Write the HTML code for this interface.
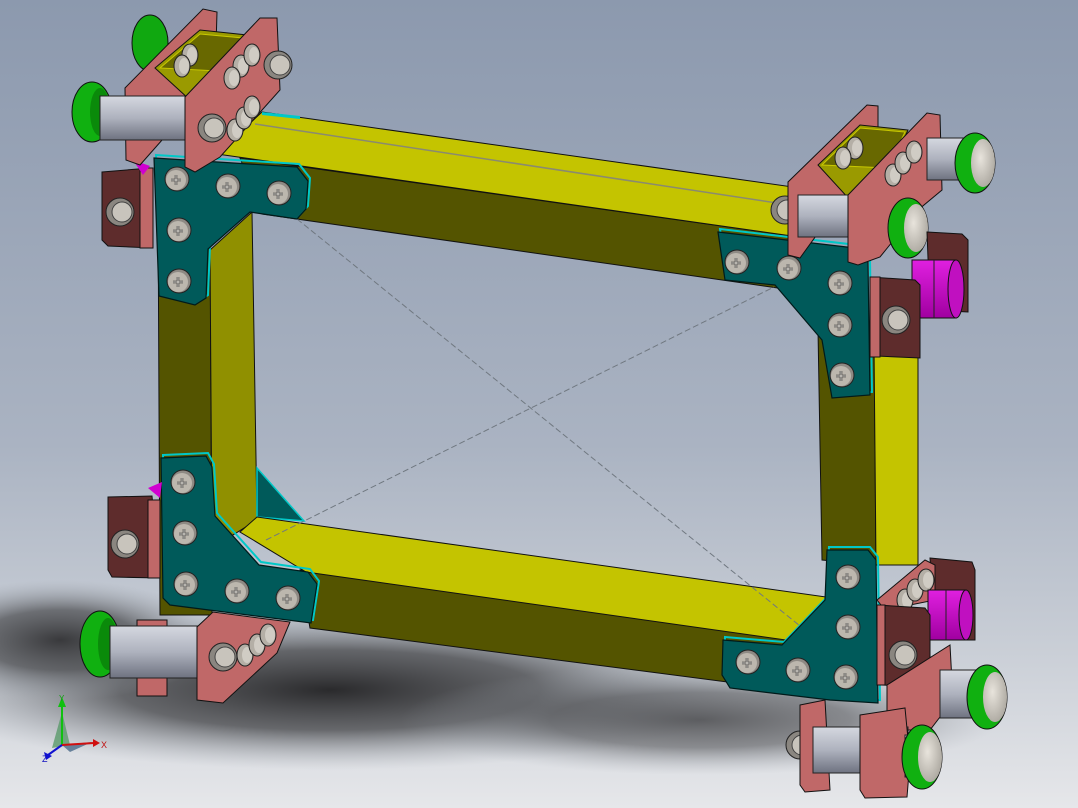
<!DOCTYPE html>
<html><head><meta charset="utf-8"><style>
html,body{margin:0;padding:0;width:1078px;height:808px;overflow:hidden;background:#9aa6b8}
svg{display:block}
</style></head><body>
<svg width="1078" height="808" viewBox="0 0 1078 808" xmlns="http://www.w3.org/2000/svg">
<defs>
<linearGradient id="bg" x1="0" y1="0" x2="0" y2="1">
<stop offset="0" stop-color="#8c99ae"/><stop offset="0.55" stop-color="#aab3c2"/><stop offset="0.8" stop-color="#c9ced6"/><stop offset="1" stop-color="#e6e7ea"/></linearGradient>
<radialGradient id="sh" cx="0.5" cy="0.5" r="0.5">
<stop offset="0" stop-color="#2a2a2c"/><stop offset="0.5" stop-color="#4a4b4e" stop-opacity="0.8"/><stop offset="1" stop-color="#9aa0a8" stop-opacity="0"/></radialGradient>
<linearGradient id="shaft" x1="0" y1="0" x2="0" y2="1">
<stop offset="0" stop-color="#d5d8e0"/><stop offset="0.5" stop-color="#aeb2be"/><stop offset="1" stop-color="#6e7280"/></linearGradient>
<linearGradient id="mag" x1="0" y1="0" x2="0" y2="1">
<stop offset="0" stop-color="#e020e0"/><stop offset="1" stop-color="#a000a0"/></linearGradient>
<radialGradient id="cap" cx="0.4" cy="0.4" r="0.7"><stop offset="0" stop-color="#e8e4dc"/><stop offset="1" stop-color="#a8a49c"/></radialGradient>
<g id="bolt"><circle r="12" fill="#8e8a84" stroke="#222" stroke-width="1"/><circle cx="-1" cy="1" r="10" fill="#bcb7ae"/><path d="M-6 1h10M-1 -4v10" stroke="#333" stroke-width="2.5"/><path d="M-6 1h10M-1 -4v10" stroke="#e6e2da" stroke-width="1"/></g>
<g id="nut"><circle r="14" fill="#8a8680" stroke="#222"/><circle cx="2" r="10" fill="#c8c4bc" stroke="#444"/></g>
<g id="sbolt"><ellipse rx="8" ry="11" fill="#b4afa6" stroke="#222"/><ellipse cx="2" rx="5" ry="8" fill="#d0ccc4"/></g>
</defs>
<rect width="1078" height="808" fill="url(#bg)"/>
<ellipse cx="330" cy="690" rx="420" ry="80" fill="url(#sh)"/>
<ellipse cx="700" cy="720" rx="300" ry="55" fill="url(#sh)" opacity="0.7"/>
<ellipse cx="60" cy="640" rx="160" ry="60" fill="url(#sh)" opacity="0.9"/>

<polygon points="818,330 874,335 876,565 822,560" fill="#545400" stroke="#111"/>
<polygon points="874,345 918,350 918,565 876,565" fill="#c4c400" stroke="#111"/>
<polygon points="240,158 792,236 792,290 262,214" fill="#545400" stroke="#111"/>
<polygon points="262,112 800,188 792,236 217,154" fill="#c4c400" stroke="#111"/>
<line x1="255" y1="124" x2="790" y2="205" stroke="#8a8a70" stroke-width="1.5"/>
<polygon points="262,112 300,116 300,119 262,115" fill="#00c8c8"/>
<polygon points="158,200 210,200 212,615 160,615" fill="#545400" stroke="#111"/>
<polygon points="210,250 252,212 257,520 212,548" fill="#909000" stroke="#111"/>
<polygon points="257,468 304,521 257,517" fill="#005a5a" stroke="#00c8c8" stroke-width="1.5"/>
<polygon points="300,570 810,640 805,692 310,628" fill="#545400" stroke="#111"/>
<polygon points="240,532 257,517 826,597 800,642 306,572" fill="#c4c400" stroke="#111"/>
<line x1="297" y1="219" x2="805" y2="630" stroke="#707880" stroke-width="1" stroke-dasharray="6,3"/>
<line x1="266" y1="540" x2="774" y2="287" stroke="#707880" stroke-width="1" stroke-dasharray="6,3"/>

<g stroke="#00c8c8" stroke-width="2" fill="none" transform="translate(2,-3)">
<polygon points="154,158 297,167 308,181 306,209 297,219 250,212 208,249 206,298 195,305 159,296"/>
<polygon points="718,232 855,248 868,262 870,395 832,398 822,340 775,285 725,280"/>
<polygon points="161,458 206,456 212,467 215,516 259,565 308,572 317,584 311,623 170,605 163,598"/>
<polygon points="723,640 782,645 825,600 827,550 868,550 876,560 878,703 830,700 730,688 722,675"/>
</g>
<g fill="#005a5a" stroke="#001a1a" stroke-width="1.2">
<polygon points="154,158 297,167 308,181 306,209 297,219 250,212 208,249 206,298 195,305 159,296"/>
<polygon points="718,232 855,248 868,262 870,395 832,398 822,340 775,285 725,280"/>
<polygon points="161,458 206,456 212,467 215,516 259,565 308,572 317,584 311,623 170,605 163,598"/>
<polygon points="723,640 782,645 825,600 827,550 868,550 876,560 878,703 830,700 730,688 722,675"/>
</g>
<use href="#bolt" x="177" y="179"/><use href="#bolt" x="228" y="186"/><use href="#bolt" x="279" y="193"/>
<use href="#bolt" x="179" y="230"/><use href="#bolt" x="179" y="281"/>
<use href="#bolt" x="737" y="262"/><use href="#bolt" x="789" y="268"/><use href="#bolt" x="840" y="283"/><use href="#bolt" x="840" y="325"/><use href="#bolt" x="842" y="375"/>
<use href="#bolt" x="183" y="482"/><use href="#bolt" x="185" y="533"/><use href="#bolt" x="186" y="584"/><use href="#bolt" x="237" y="591"/><use href="#bolt" x="288" y="598"/>
<use href="#bolt" x="848" y="577"/><use href="#bolt" x="848" y="627"/><use href="#bolt" x="846" y="677"/><use href="#bolt" x="798" y="670"/><use href="#bolt" x="748" y="662"/>

<!-- TOP-LEFT -->
<polygon points="102,172 150,168 153,248 108,246 102,240" fill="#5e2c2c" stroke="#111"/>
<polygon points="140,168 153,168 153,248 140,248" fill="#c06868" stroke="#111"/>
<use href="#nut" x="120" y="212"/>
<polygon points="133,160 150,166 143,175" fill="#d000d0"/>
<ellipse cx="150" cy="43" rx="18" ry="28" fill="#10a810" stroke="#111"/>
<polygon points="125,88 203,9 217,12 215,80 140,165 126,160" fill="#c06868" stroke="#111"/>
<polygon points="155,68 200,30 247,35 240,75 190,100" fill="#9a9a00" stroke="#111"/>
<polygon points="160,68 200,34 243,38 238,72" fill="#686800" stroke="#c8c800"/>
<use href="#sbolt" x="190" y="55"/><use href="#sbolt" x="182" y="66"/>
<ellipse cx="92" cy="112" rx="20" ry="30" fill="#10b010" stroke="#111"/>
<ellipse cx="100" cy="112" rx="10" ry="24" fill="#0a8a0a"/>
<rect x="100" y="96" width="90" height="44" fill="url(#shaft)" stroke="#222"/>
<polygon points="185,97 260,18 277,18 280,90 220,157 195,172 185,167" fill="#c06868" stroke="#111"/>
<use href="#nut" x="278" y="65"/><use href="#nut" x="212" y="128"/>
<use href="#sbolt" x="241" y="66"/><use href="#sbolt" x="252" y="55"/><use href="#sbolt" x="232" y="78"/>
<use href="#sbolt" x="235" y="130"/><use href="#sbolt" x="244" y="118"/><use href="#sbolt" x="252" y="107"/>

<!-- TOP-RIGHT -->
<use href="#nut" x="785" y="210"/>
<polygon points="788,182 867,105 878,106 878,150 800,258 788,255" fill="#c06868" stroke="#111"/>
<polygon points="818,165 860,125 908,130 890,170 850,200" fill="#9a9a00" stroke="#111"/>
<polygon points="822,165 860,128 905,132 888,168" fill="#686800" stroke="#c8c800"/>
<use href="#sbolt" x="855" y="148"/><use href="#sbolt" x="843" y="158"/>
<rect x="798" y="195" width="95" height="42" fill="url(#shaft)" stroke="#222"/>
<polygon points="848,195 927,113 940,115 942,190 918,210 880,257 858,265 848,262" fill="#c06868" stroke="#111"/>
<use href="#sbolt" x="893" y="175"/><use href="#sbolt" x="903" y="163"/><use href="#sbolt" x="914" y="152"/>
<rect x="927" y="138" width="36" height="42" fill="url(#shaft)" stroke="#222"/>
<ellipse cx="975" cy="163" rx="20" ry="30" fill="#10b010" stroke="#111"/>
<ellipse cx="983" cy="163" rx="12" ry="24" fill="url(#cap)"/>
<ellipse cx="908" cy="228" rx="20" ry="30" fill="#10b010" stroke="#111"/>
<ellipse cx="916" cy="228" rx="12" ry="24" fill="url(#cap)"/>
<polygon points="927,232 962,234 968,240 968,312 930,310" fill="#5e2c2c" stroke="#111"/>
<rect x="912" y="260" width="44" height="58" fill="url(#mag)" stroke="#111"/>
<ellipse cx="956" cy="289" rx="8" ry="29" fill="#c010c0" stroke="#111"/>
<line x1="934" y1="260" x2="934" y2="318" stroke="#222"/>
<polygon points="870,277 915,280 920,285 920,358 876,356 870,350" fill="#5e2c2c" stroke="#111"/>
<rect x="870" y="277" width="10" height="80" fill="#c06868" stroke="#111"/>
<use href="#nut" x="896" y="320"/>

<!-- BOTTOM-LEFT -->
<polygon points="108,497 152,496 160,578 112,577 108,570" fill="#5e2c2c" stroke="#111"/>
<rect x="148" y="500" width="12" height="78" fill="#c06868" stroke="#111"/>
<use href="#nut" x="125" y="544"/>
<polygon points="148,488 162,482 160,498" fill="#d000d0"/>
<rect x="137" y="620" width="30" height="76" fill="#c06868" stroke="#111"/>
<ellipse cx="100" cy="644" rx="20" ry="33" fill="#10b010" stroke="#111"/>
<ellipse cx="108" cy="644" rx="10" ry="26" fill="#0a8a0a"/>
<rect x="110" y="626" width="95" height="52" fill="url(#shaft)" stroke="#222"/>
<polygon points="197,627 213,612 290,622 277,653 223,703 197,700" fill="#c06868" stroke="#111"/>
<use href="#nut" x="223" y="657"/>
<use href="#sbolt" x="245" y="655"/><use href="#sbolt" x="257" y="645"/><use href="#sbolt" x="268" y="635"/>

<!-- BOTTOM-RIGHT -->
<polygon points="930,558 972,562 975,570 975,640 935,640" fill="#5e2c2c" stroke="#111"/>
<polygon points="877,600 925,560 935,565 935,600 885,610" fill="#c06868" stroke="#111"/>
<use href="#sbolt" x="905" y="600"/><use href="#sbolt" x="915" y="590"/><use href="#sbolt" x="926" y="580"/>
<rect x="928" y="590" width="38" height="50" fill="url(#mag)" stroke="#111"/>
<ellipse cx="966" cy="615" rx="7" ry="25" fill="#c010c0" stroke="#111"/>
<line x1="946" y1="590" x2="946" y2="640" stroke="#222"/>
<polygon points="877,605 925,608 930,615 930,687 882,685 877,680" fill="#5e2c2c" stroke="#111"/>
<rect x="877" y="605" width="8" height="80" fill="#c06868" stroke="#111"/>
<use href="#nut" x="903" y="655"/>
<polygon points="887,685 950,645 953,700 930,730 887,730" fill="#c06868" stroke="#111"/>
<rect x="940" y="670" width="40" height="48" fill="url(#shaft)" stroke="#222"/>
<ellipse cx="987" cy="697" rx="20" ry="32" fill="#10b010" stroke="#111"/>
<ellipse cx="995" cy="697" rx="12" ry="25" fill="url(#cap)"/>
<use href="#nut" x="800" y="745"/>
<polygon points="800,705 825,700 830,790 805,792 800,785" fill="#c06868" stroke="#111"/>
<rect x="813" y="727" width="95" height="46" fill="url(#shaft)" stroke="#222"/>
<polygon points="860,715 905,708 910,760 907,797 865,798 860,790" fill="#c06868" stroke="#111"/>
<rect x="905" y="735" width="20" height="42" fill="url(#shaft)" stroke="#222"/>
<ellipse cx="922" cy="757" rx="20" ry="32" fill="#10b010" stroke="#111"/>
<ellipse cx="930" cy="757" rx="12" ry="25" fill="url(#cap)"/>

<!-- axis triad -->
<g>
<polygon points="52,748 62,712 70,745" fill="#5a9a6a" opacity="0.8"/>
<polygon points="62,745 92,742 70,752" fill="#4a6a8a" opacity="0.8"/>
<line x1="62" y1="745" x2="62" y2="705" stroke="#10c010" stroke-width="2"/>
<polygon points="58,707 62,697 66,707" fill="#10c010"/>
<line x1="62" y1="745" x2="94" y2="743" stroke="#d01010" stroke-width="2"/>
<polygon points="93,739 100,743 93,747" fill="#d01010"/>
<line x1="62" y1="745" x2="48" y2="755" stroke="#1010d0" stroke-width="2"/>
<polygon points="44,752 46,760 52,756" fill="#1010d0"/>
<text x="59" y="701" font-family="Liberation Sans, sans-serif" font-size="8" fill="#10a010">Y</text>
<text x="101" y="748" font-family="Liberation Sans, sans-serif" font-size="9" fill="#c01010">X</text>
<text x="42" y="762" font-family="Liberation Sans, sans-serif" font-size="9" fill="#1010c0">Z</text>
</g>
</svg>
</body></html>
